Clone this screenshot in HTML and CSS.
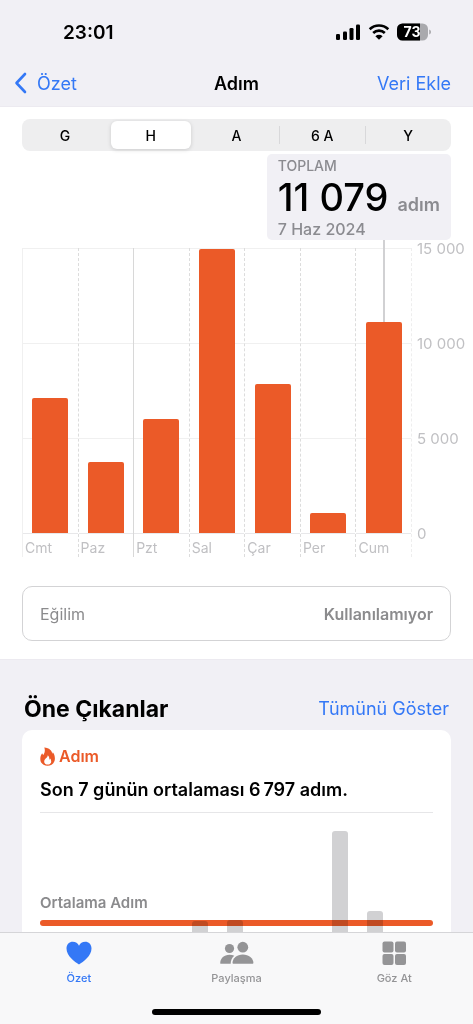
FILE: index.html
```html
<!DOCTYPE html>
<html lang="tr">
<head>
<meta charset="utf-8">
<meta name="viewport" content="width=device-width, initial-scale=1">
<title>Adım</title>
<link rel="stylesheet" href="styles.css">
</head>
<body>
<div class="app">
  <header class="header">
    <div class="status">
      <span class="clock">23:01</span>
      <div class="status-icons">
        <svg class="signal" viewBox="0 0 25 16" width="25" height="16" aria-hidden="true">
          <rect x="0" y="10" width="4" height="6" rx="1.3"/><rect x="7" y="7.500" width="4" height="8.500" rx="1.300"/><rect x="13.500" y="4" width="4" height="12" rx="1.300"/><rect x="20" y="0.500" width="4" height="15.500" rx="1.300"/>
        </svg>
        <svg class="wifi" viewBox="0 0 22 16" width="22" height="16" aria-hidden="true">
          <path d="M1.700 5.300a13.400 13.400 0 0 1 18.600 0M5.200 9a8.300 8.300 0 0 1 11.600 0" fill="none" stroke="#000" stroke-width="2.600"/>
          <path d="M11 15.800 7.400 12.200a5.200 5.200 0 0 1 7.200 0z"/>
        </svg>
        <svg class="battery" viewBox="0 0 35 18" width="35" height="18" role="img" aria-label="Pil yüzde 73">
          <defs><clipPath id="cell"><rect width="31" height="17" y="0.500" rx="5.500"/></clipPath></defs>
          <g clip-path="url(#cell)"><rect width="31" height="18" fill="#a9a9ad"/><rect width="23" height="18"/></g>
          <path d="M32.200 6.500c2.400.8 2.400 4.200 0 5z" fill="#a9a9ad"/>
          <text x="15" y="14" text-anchor="middle" class="battery-text">73</text>
        </svg>
      </div>
    </div>
    <nav class="navbar">
      <a class="back" href="#ozet">
        <svg viewBox="0 0 13 22" width="13" height="22" aria-hidden="true"><path d="M11 2 2.500 11 11 20" fill="none" stroke="currentColor" stroke-width="2.600" stroke-linecap="round" stroke-linejoin="round"/></svg>
        Özet
      </a>
      <h1 class="title">Adım</h1>
      <a class="add" href="#ekle">Veri Ekle</a>
    </nav>
  </header>

  <main class="content">
    <section class="panel">
      <div class="segments" role="group" aria-label="Zaman aralığı">
        <button class="segment">G</button>
        <button class="segment selected" aria-pressed="true">H</button>
        <button class="segment">A</button>
        <button class="segment ruled">6 A</button>
        <button class="segment ruled">Y</button>
      </div>
      <div class="summary">
        <div class="summary-label">TOPLAM</div>
        <div class="summary-value"><span class="number">11 079</span><span class="unit">adım</span></div>
        <div class="summary-label summary-date">7 Haz 2024</div>
      </div>
      <div class="chart">
        <div class="plot">
          <div class="day first"><div class="track"><div class="bar" style="height:47.300%"></div></div><span class="day-name">Cmt</span></div>
          <div class="day"><div class="track"><div class="bar" style="height:24.800%"></div></div><span class="day-name">Paz</span></div>
          <div class="day week"><div class="track"><div class="bar" style="height:40%"></div></div><span class="day-name">Pzt</span></div>
          <div class="day"><div class="track"><div class="bar" style="height:99.600%"></div></div><span class="day-name">Sal</span></div>
          <div class="day"><div class="track"><div class="bar" style="height:52.400%"></div></div><span class="day-name">Çar</span></div>
          <div class="day"><div class="track"><div class="bar" style="height:7%"></div></div><span class="day-name">Per</span></div>
          <div class="day"><div class="track"><div class="bar picked" style="height:73.900%"></div></div><span class="day-name">Cum</span></div>
        </div>
        <div class="axis"><span>15 000</span><span>10 000</span><span>5 000</span><span>0</span></div>
      </div>
      <button class="trend"><span>Eğilim</span><span class="trend-value">Kullanılamıyor</span></button>
    </section>

    <section class="highlights">
      <div class="section-head">
        <h2 class="section-title">Öne Çıkanlar</h2>
        <a class="show-all" href="#tumu">Tümünü Göster</a>
      </div>
      <article class="card">
        <div class="card-kind">
          <svg viewBox="0 0 15 19" width="15" height="19" aria-hidden="true"><path fill="#eb5a28" fill-rule="evenodd" d="M4.200.5C9.500.8 12 4 12.200 6.600c.5-.3.600-.9.500-1.500 1.500 1.700 2.200 4 2.200 6.500 0 4.400-3 7.100-7.300 7.100S.3 16 .3 11.900c0-2.600 1-4.200 1.900-5.600.2.900.600 1.400 1.200 1.700C4.900 5.700 5.300 2.700 4.200.5ZM7.700 8.200c.3 2.300-3.500 3.600-3.500 6.400 0 1.900 1.500 3 3.500 3s3.500-1.200 3.500-3.200c0-1.200-.4-2.100-1-2.800-.1.600-.4 1-.8 1.200.1-1.800-.4-3.500-1.700-4.600Z"/></svg>
          Adım
        </div>
        <p class="card-text">Son 7 günün ortalaması 6&#8201;797 adım.</p>
        <div class="mini">
          <div class="mini-bars">
            <div class="mini-bar" style="height:78px"></div>
            <div class="mini-bar" style="height:79px"></div>
            <div class="mini-bar" style="height:41px"></div>
            <div class="mini-bar" style="height:67px"></div>
            <div class="mini-bar" style="height:168px"></div>
            <div class="mini-bar" style="height:88px"></div>
            <div class="mini-bar" style="height:12px"></div>
          </div>
          <div class="average">Ortalama Adım</div>
        </div>
      </article>
    </section>
  </main>

  <footer class="footer">
    <nav class="tabs">
      <a class="tab active" href="#ozet">
        <svg viewBox="0 0 26 24" width="26" height="24" aria-hidden="true"><path fill="currentColor" d="M13 23.500C8.800 21 .5 15 .5 7.600.5 3.500 3.300.8 6.800.8 9.600.8 11.900 2.300 13 4.700 14.100 2.300 16.400.8 19.200.8c3.500 0 6.300 2.700 6.300 6.800C25.500 15 17.200 21 13 23.500Z"/></svg>
        Özet
      </a>
      <a class="tab" href="#paylasma">
        <svg viewBox="0 0 36 24" width="36" height="24" aria-hidden="true"><g fill="currentColor"><circle cx="10.500" cy="7.500" r="4.600"/><path d="M1.300 22.800C.8 17.500 5 13.700 10.500 13.700c1.800 0 3.400.4 4.800 1.100-2.300 1.900-3.700 4.700-3.600 8H2.500Z"/><circle cx="23.800" cy="6.200" r="5.400"/><path d="M14.600 22.800c-.7 0-1.100-.4-1.100-1.100 0-4.100 4.300-8.200 10.300-8.200s10.600 4.100 10.600 8.200c0 .7-.4 1.100-1.100 1.100Z"/></g></svg>
        Paylaşma
      </a>
      <a class="tab" href="#gozat">
        <svg viewBox="0 0 24 24" width="24" height="24" aria-hidden="true"><g fill="currentColor"><rect x="0.500" y="0.500" width="11" height="11" rx="2"/><rect x="13" y="0.500" width="11" height="11" rx="2"/><rect x="0.500" y="13" width="11" height="11" rx="2"/><rect x="13" y="13" width="11" height="11" rx="2"/></g></svg>
        Göz At
      </a>
    </nav>
    <div class="home-bar"></div>
  </footer>
</div>
</body>
</html>
```

FILE: styles.css
```css
* { box-sizing: border-box; }
body {
  margin: 0;
  background: #f1f0f5;
  color: #000;
  font-family: Inter, "Noto Sans", sans-serif;
}
a { color: #3478f6; text-decoration: none; }
h1, h2, p { margin: 0; }
button { font-family: inherit; color: inherit; border: 0; padding: 0; background: none; }
svg { display: block; flex: none; }

.app { height: 100vh; display: flex; flex-direction: column; }

.header { border-bottom: 1px solid #eceaf0; }
.status {
  display: flex;
  justify-content: space-between;
  align-items: center;
  height: 60px;
  padding: 4px 41px 0 63px;
}
.clock { font-size: 19px; font-weight: 600; }
.status-icons { display: flex; align-items: center; gap: 7px; }
.battery-text { fill: #fff; font-size: 14px; font-weight: 700; }
.navbar {
  display: grid;
  grid-template-columns: 1fr auto 1fr;
  align-items: center;
  height: 46px;
  padding: 0 22px 0 14px;
  font-size: 18px;
}
.back { display: flex; align-items: center; gap: 10px; }
.title { padding-left: 8px; font-size: 18px; font-weight: 600; }
.add { justify-self: end; }

.content { flex: 1; min-height: 0; overflow-y: auto; scrollbar-width: none; }
.panel { background: #fff; padding: 12px 0 18px; }
.segments {
  display: grid;
  grid-template-columns: repeat(5, 1fr);
  height: 32px;
  margin: 0 22px;
  padding: 2px 0;
  border-radius: 8px;
  background: #eeeeef;
}
.segment { font-size: 14px; font-weight: 500; }
.selected {
  margin: 0 3px;
  border-radius: 6px;
  background: #fff;
  box-shadow: 0 1px 4px #00000026;
}
.ruled {
  background: linear-gradient(#d8d8da, #d8d8da) left center / 1px 18px no-repeat;
}

.summary {
  width: fit-content;
  margin: 3px 22px 0 auto;
  padding: 3px 11px 2px;
  border-radius: 5px;
  background: #f1f0f5;
}
.summary-label { color: #8b8b90; font-size: 14px; font-weight: 500; line-height: 18px; }
.summary-date { font-size: 16px; }
.summary-value {
  display: flex;
  align-items: baseline;
  gap: 9px;
  height: 45px;
}
.number { font-size: 38px; font-weight: 500; line-height: 45px; }
.unit { color: #8b8b90; font-size: 18px; font-weight: 600; line-height: 20px; }

.chart { display: flex; padding: 8px 0 0 22px; }
.plot {
  flex: 1;
  display: flex;
  border-right: 1px dashed #eeeeee;
}
.day { flex: 1; border-left: 1px dashed #dcdcdc; }
.first { border-left: 1px solid #f0f0f0; }
.week { border-left: 1px solid #d8d8d8; }
.track {
  display: flex;
  justify-content: center;
  align-items: flex-end;
  height: 286px;
  border-bottom: 1px solid #e8e8ea;
  background: repeating-linear-gradient(#f0f0f0 0 1px, transparent 1px 95px);
}
.bar {
  position: relative;
  width: 36px;
  border-radius: 2px 2px 0 0;
  background: #eb5a28;
}
.picked::before {
  content: "";
  position: absolute;
  bottom: 100%;
  left: 17px;
  width: 2px;
  height: 82px;
  background: #d1d1d3;
}
.day-name {
  display: block;
  height: 23px;
  padding-left: 2px;
  color: #c0c0c3;
  font-size: 14px;
  line-height: 28px;
}
.axis {
  display: flex;
  flex-direction: column;
  justify-content: space-between;
  width: 61px;
  height: 305px;
  margin-top: -9px;
  padding-left: 5px;
  color: #c0c0c3;
  font-size: 15px;
  line-height: 20px;
}

.trend {
  display: flex;
  justify-content: space-between;
  align-items: center;
  width: calc(100% - 44px);
  height: 55px;
  margin: 29px 22px 0;
  padding: 0 17px;
  border: 1px solid #d3d3d5;
  border-radius: 10px;
  color: #8b8b8d;
  font-size: 16px;
}
.trend-value { font-weight: 600; }

.highlights { padding: 31px 22px 0; border-top: 1px solid #eceaf0; }
.section-head {
  display: flex;
  justify-content: space-between;
  align-items: center;
  padding: 0 2px 3px;
  line-height: 36px;
}
.section-title { font-size: 23px; font-weight: 700; }
.show-all { font-size: 18px; }
.card { padding: 15px 18px 0; border-radius: 10px; background: #fff; }
.card-kind {
  display: flex;
  align-items: center;
  gap: 4px;
  height: 22px;
  color: #eb5a28;
  font-size: 16px;
  font-weight: 600;
}
.card-text {
  padding: 11px 0;
  font-size: 18px;
  font-weight: 600;
  line-height: 23px;
  border-bottom: 1px solid #e6e6e8;
}
.mini { position: relative; height: 186px; }
.mini-bars {
  display: flex;
  justify-content: space-between;
  align-items: flex-end;
  height: 100%;
  margin: 0 15px 0 152px;
}
.mini-bar { width: 16px; border-radius: 3px 3px 0 0; background: #d1d1d3; }
.average {
  position: absolute;
  top: 80px;
  left: 0;
  right: 0;
  color: #8b8b8d;
  font-size: 15px;
  font-weight: 600;
  line-height: 20px;
  mix-blend-mode: multiply;
}
.average::after {
  content: "";
  display: block;
  height: 6px;
  margin-top: 7px;
  border-radius: 3px;
  background: #eb5a28;
}

.footer {
  display: flex;
  flex-direction: column;
  justify-content: space-between;
  align-items: center;
  height: 92px;
  padding: 8px 0 9px;
  border-top: 1px solid #d5d5d8;
  background: #f8f8f9;
}
.tabs { display: flex; width: 100%; }
.tab {
  flex: 1;
  display: flex;
  flex-direction: column;
  align-items: center;
  gap: 6px;
  color: #949496;
  font-size: 11px;
  font-weight: 500;
  line-height: 14px;
}
.active { color: #3478f6; }
.home-bar { width: 169px; height: 6px; border-radius: 3px; background: #000; }
```
